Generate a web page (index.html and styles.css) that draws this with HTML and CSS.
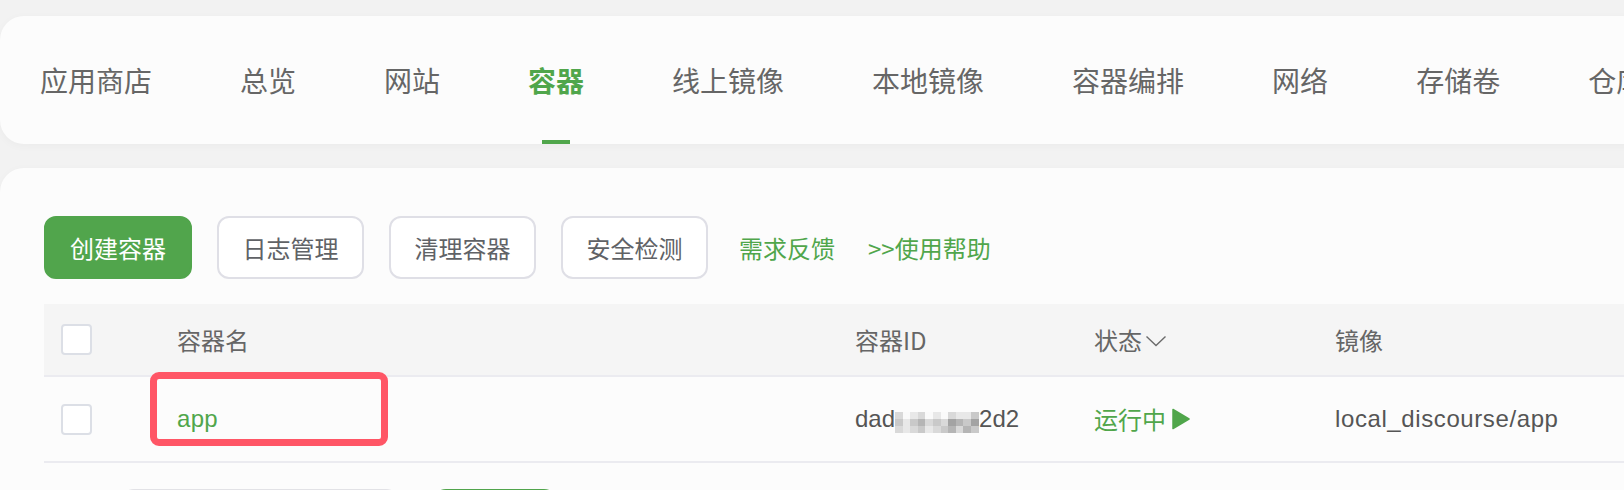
FILE: index.html
```html
<!DOCTYPE html>
<html lang="zh-CN">
<head>
<meta charset="utf-8">
<title>容器</title>
<link rel="stylesheet" href="styles.css">
</head>
<body>
<div class="page">
  <nav class="tabs">
    <a class="tab">应用商店</a>
    <a class="tab">总览</a>
    <a class="tab">网站</a>
    <a class="tab active">容器</a>
    <a class="tab">线上镜像</a>
    <a class="tab">本地镜像</a>
    <a class="tab">容器编排</a>
    <a class="tab">网络</a>
    <a class="tab">存储卷</a>
    <a class="tab">仓库</a>
  </nav>

  <section class="panel">
    <div class="toolbar">
      <button class="btn primary">创建容器</button>
      <button class="btn">日志管理</button>
      <button class="btn">清理容器</button>
      <button class="btn">安全检测</button>
      <a class="link">需求反馈</a>
      <a class="link">&gt;&gt;使用帮助</a>
    </div>

    <div class="table">
      <div class="row head">
        <div class="cell chk"><span class="checkbox"></span></div>
        <div class="cell">容器名</div>
        <div class="cell">容器ID</div>
        <div class="cell">状态<svg class="caret" width="22" height="12" viewBox="0 0 22 12"><polyline points="1.5,1.5 11,10.5 20.5,1.5" fill="none" stroke="#6b6b6b" stroke-width="1.4"/></svg></div>
        <div class="cell">镜像</div>
      </div>
      <div class="row">
        <div class="cell chk"><span class="checkbox"></span></div>
        <div class="cell name">app</div>
        <div class="cell id">dad<span class="mosaic"><i class="s2"></i><i class="s0"></i><i class="s1"></i><i class="s2"></i><i class="s0"></i><i class="s1"></i><i class="s0"></i><i class="s2"></i><i class="s1"></i><i class="s1"></i><i class="s3"></i><i class="s3"></i><i class="s1"></i><i class="s3"></i><i class="s4"></i><i class="s2"></i><i class="s3"></i><i class="s2"></i><i class="s5"></i><i class="s4"></i><i class="s3"></i><i class="s5"></i><i class="s2"></i><i class="s1"></i><i class="s2"></i><i class="s3"></i><i class="s1"></i><i class="s2"></i><i class="s3"></i><i class="s4"></i><i class="s2"></i><i class="s4"></i><i class="s3"></i></span>2d2</div>
        <div class="cell status">运行中<svg class="play" width="18" height="22" viewBox="0 0 18 22"><path d="M1 1.5 L17 11 L1 20.5 Z" fill="#50a64b" stroke="#50a64b" stroke-width="1.5" stroke-linejoin="round"/></svg></div>
        <div class="cell image">local_discourse/app</div>
      </div>
    </div>

    <div class="pager">
      <span class="ghost"></span>
      <span class="go"></span>
    </div>

    <div class="highlight"></div>
  </section>
</div>
</body>
</html>
```

FILE: styles.css
```css
* { box-sizing: border-box; }

html, body {
  margin: 0;
  padding: 0;
}

body {
  background: #f2f2f2;
  font-family: "Liberation Sans", "Noto Sans CJK SC", sans-serif;
  color: #606266;
  overflow: hidden;
  width: 1624px;
  height: 490px;
}

.page {
  padding-top: 16px;
}

/* top navigation card */
.tabs {
  display: flex;
  align-items: stretch;
  gap: 88px;
  height: 128px;
  margin-right: -60px;
  padding-left: 40px;
  background: #fcfcfc;
  border-radius: 24px;
  box-shadow: 0 2px 10px rgba(0, 0, 0, 0.03);
  white-space: nowrap;
}

.tab {
  position: relative;
  display: flex;
  align-items: center;
  font-family: "Noto Sans CJK SC", sans-serif;
  font-size: 28px;
  line-height: 1;
  color: #666666;
  flex: none;
}

.tab.active {
  color: #50a64b;
  font-weight: 700;
}

.tab.active::after {
  content: "";
  position: absolute;
  left: 50%;
  bottom: 0;
  width: 28px;
  height: 4px;
  margin-left: -14px;
  background: #50a64b;
}

/* main panel */
.panel {
  position: relative;
  margin-top: 24px;
  margin-right: -60px;
  padding: 48px 0 0 44px;
  min-height: 400px;
  background: #fcfcfc;
  border-radius: 24px;
  box-shadow: 0 2px 10px rgba(0, 0, 0, 0.03);
}

.toolbar {
  display: flex;
  align-items: center;
  gap: 25px;
}

.btn {
  width: 147px;
  height: 63px;
  padding: 0;
  border: 2px solid #dfdfe6;
  border-radius: 12px;
  background: #ffffff;
  color: #606266;
  font-family: "Noto Sans CJK SC", sans-serif;
  font-size: 24px;
  line-height: 1;
}

.btn.primary {
  width: 148px;
  background: #51a54c;
  border-color: #51a54c;
  color: #ffffff;
}

.link {
  margin-left: 6px;
  color: #50a64b;
  font-family: "Noto Sans CJK SC", sans-serif;
  font-size: 24px;
  line-height: 1;
}

.link + .link {
  margin-left: 8px;
}

/* table */
.table {
  margin-top: 25px;
}

.row {
  display: grid;
  grid-template-columns: 133px 678px 239px 241px 1fr;
  height: 86px;
  border-bottom: 2px solid #ebebf0;
}

.row.head {
  height: 73px;
  background: #f5f5f5;
  color: #666666;
}

.cell {
  display: flex;
  align-items: center;
  font-size: 24px;
  line-height: 1;
  white-space: nowrap;
  font-family: "Noto Sans CJK SC", sans-serif;
}

.row:not(.head) .cell {
  font-family: "Liberation Sans", "Noto Sans CJK SC", sans-serif;
}

.cell.chk {
  padding-left: 17px;
}

.checkbox {
  display: block;
  width: 31px;
  height: 31px;
  border: 2px solid #dcdfe6;
  border-radius: 4px;
  background: #ffffff;
}

.caret {
  margin-left: 3px;
  margin-top: 2px;
}

.cell.name {
  color: #50a64b;
  letter-spacing: 0.3px;
}

.cell.id {
  color: #555555;
}

.mosaic {
  display: grid;
  grid-template-columns: repeat(11, 7.6px);
  grid-auto-rows: 7px;
  width: 84px;
  height: 21px;
  margin: 6px 0 0 0;
}

.mosaic i { display: block; }
.s0 { background: #fafafa; }
.s1 { background: #e8e8e8; }
.s2 { background: #d9d9d9; }
.s3 { background: #c9c9c9; }
.s4 { background: #b5b5b5; }
.s5 { background: #a3a3a3; }

.cell.status {
  color: #50a64b;
  font-family: "Noto Sans CJK SC", sans-serif !important;
}

.play {
  margin-left: 6px;
}

.cell.image {
  color: #555555;
  letter-spacing: 0.6px;
}

/* partially visible controls below the table */
.pager {
  display: flex;
  gap: 32px;
  margin-top: 26px;
  padding-left: 76px;
}

.ghost {
  width: 280px;
  height: 60px;
  border: 2px solid #e2e2e6;
  border-radius: 14px;
  background: #ffffff;
}

.go {
  width: 126px;
  height: 60px;
  border-radius: 14px;
  background: #51a54c;
}

/* annotation box */
.highlight {
  position: absolute;
  left: 150px;
  top: 204px;
  width: 238px;
  height: 74px;
  border: 7px solid #ff5666;
  border-radius: 9px;
}
```
